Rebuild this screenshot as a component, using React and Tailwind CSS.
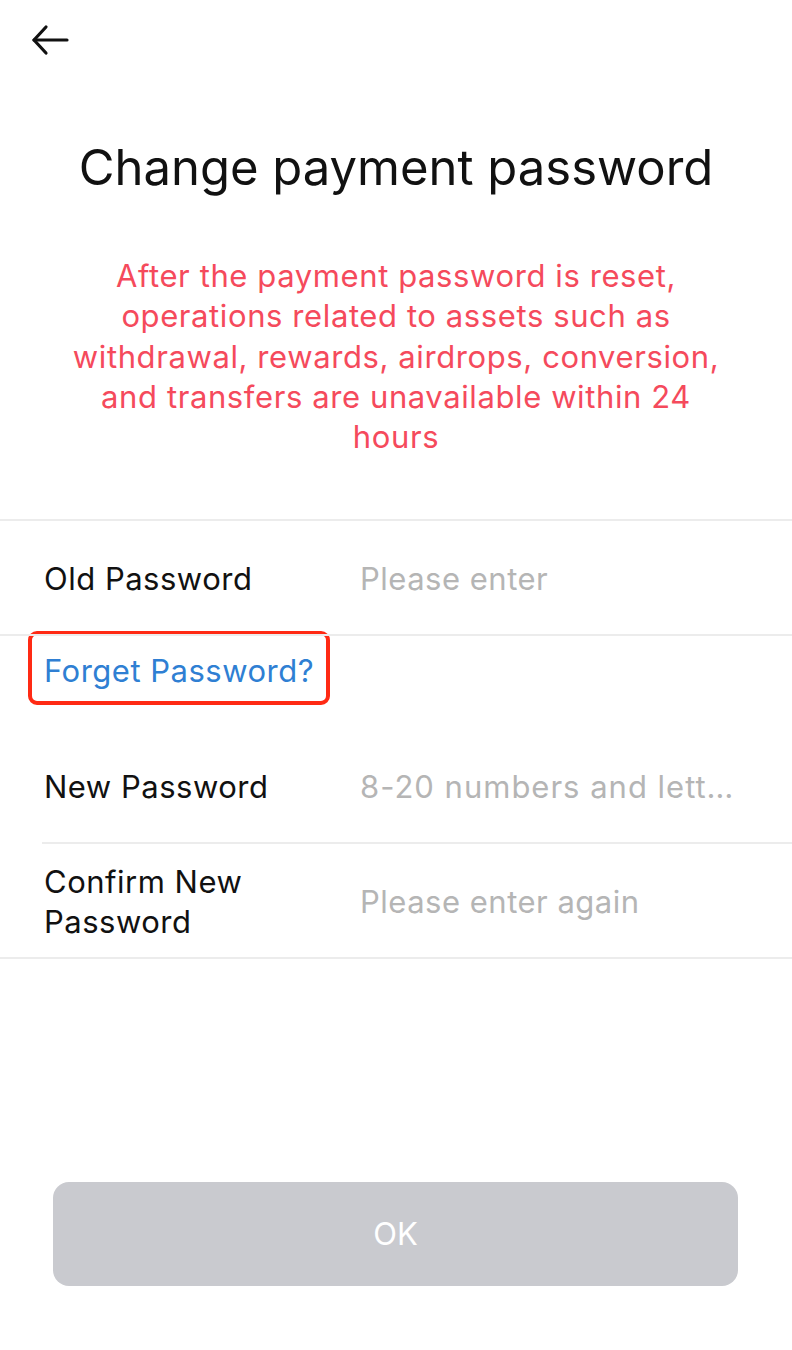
import React from 'react';

const Row = ({ label, placeholder, divider = 'full', phClass = '' }) => (
  <div className="relative flex items-center min-h-[115px] pl-[44px] pr-[42px] text-[31px] leading-[40px] tracking-[0.5px]">
    <div className="w-[290px] shrink-0 mr-[26px] text-[#111]">{label}</div>
    <div className={`flex-1 min-w-0 truncate text-[#b5b5b5] ${phClass}`}>{placeholder}</div>
    {divider === 'full' && <div className="absolute left-0 right-0 bottom-0 h-[2px] bg-[#ececec]" />}
    {divider === 'inset' && <div className="absolute left-[42px] right-0 bottom-0 h-[2px] bg-[#ececec]" />}
  </div>
);

const App = () => {
  return (
    <div className="w-[792px] h-[1350px] bg-white flex flex-col" style={{ fontFamily: 'Inter, "Noto Sans", sans-serif' }}>
      <div className="h-[80px] flex items-center pl-[29px]">
        <svg width="42" height="42" viewBox="0 0 42 42" fill="none" stroke="#111" strokeWidth="3.2" strokeLinecap="round" strokeLinejoin="round">
          <path d="M5 21h33" />
          <path d="M17 8L5 21l12 13" />
        </svg>
      </div>
      <h1 className="mt-[58px] text-center text-[49px] leading-[60px] text-[#111]">Change payment password</h1>
      <p className="mt-[58px] px-[70px] text-center text-[31px] leading-[40.3px] tracking-[0.6px] text-[#f54a5c]">
        After the payment password is reset, operations related to assets such as withdrawal, rewards, airdrops, conversion, and transfers are unavailable within 24 hours
      </p>
      <div className="mt-[62px] h-[2px] bg-[#ececec]" />
      <Row label="Old Password" placeholder="Please enter" />
      <div className="h-[93px] pl-[28px] flex items-start">
        <div className="mt-[-5px] h-[74px] px-[12px] pt-[5px] flex items-center border-[4px] border-[#ff2a14] rounded-[9px]">
          <span className="text-[31px] tracking-[0.5px] text-[#2f7fd3]">Forget Password?</span>
        </div>
      </div>
      <Row label="New Password" placeholder="8-20 numbers and letters" divider="inset" phClass="tracking-[1px]" />
      <Row label="Confirm New Password" placeholder="Please enter again" />
      <div className="flex-1" />
      <div className="pl-[53px] pb-[64px] pr-[54px]">
        <button className="w-full h-[104px] rounded-[16px] bg-[#c9cacf] text-white text-[31px]">OK</button>
      </div>
    </div>
  );
};

export default App;
